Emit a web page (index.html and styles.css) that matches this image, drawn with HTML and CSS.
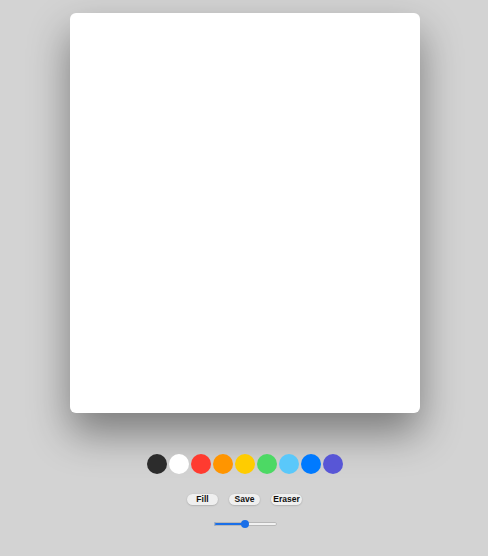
FILE: index.html
```html
<!DOCTYPE html>
<html>
<head>
<meta charset="utf-8">
<link rel="stylesheet" href="styles.css">
</head>
<body>
<div class="app">
  <div class="canvas"></div>
  <div class="palette">
    <span class="swatch c-black"></span>
    <span class="swatch c-white"></span>
    <span class="swatch c-red"></span>
    <span class="swatch c-orange"></span>
    <span class="swatch c-yellow"></span>
    <span class="swatch c-green"></span>
    <span class="swatch c-sky"></span>
    <span class="swatch c-blue"></span>
    <span class="swatch c-indigo"></span>
  </div>
  <div class="actions">
    <button class="btn">Fill</button>
    <button class="btn">Save</button>
    <button class="btn">Eraser</button>
  </div>
  <input class="range" type="range" min="1" max="100" value="50">
</div>
</body>
</html>
```
FILE: styles.css
```css
html, body {
  margin: 0;
  padding: 0;
  background: #d3d3d3;
}
.app {
  display: flex;
  flex-direction: column;
  align-items: center;
  padding-top: 13px;
  padding-left: 2px;
  font-family: "Liberation Sans", Arial, sans-serif;
}
.canvas {
  width: 350px;
  height: 400px;
  background: #fff;
  border-radius: 6px;
  box-shadow: 0 20px 40px rgba(0, 0, 0, 0.42);
}
.palette {
  display: flex;
  gap: 2px;
  margin-top: 41px;
}
.swatch {
  width: 20px;
  height: 20px;
  border-radius: 50%;
  display: block;
}
.c-black { background: #2c2c2c; }
.c-white { background: #ffffff; }
.c-red { background: #ff3b30; }
.c-orange { background: #ff9500; }
.c-yellow { background: #ffcc00; }
.c-green { background: #4cd964; }
.c-sky { background: #5ac8fa; }
.c-blue { background: #007aff; }
.c-indigo { background: #5856d6; }
.actions {
  display: flex;
  gap: 11px;
  margin-top: 20px;
  margin-left: -1px;
}
.btn {
  font-family: "Liberation Sans", Arial, sans-serif;
  font-weight: bold;
  font-size: 8.5px;
  line-height: 9px;
  width: 31px;
  padding: 1px 0;
  border: none;
  border-radius: 6px;
  background: #efefef;
  color: #111;
  text-align: center;
  box-shadow: 0 0.5px 1.5px rgba(0, 0, 0, 0.25);
}
.range {
  -webkit-appearance: none;
  appearance: none;
  width: 63px;
  height: 8px;
  margin: 15px 0 0;
  background: transparent;
}
.range::-webkit-slider-runnable-track {
  height: 4px;
  border-radius: 2px;
  background: linear-gradient(to right, #1a6fe8 0 50%, #f2f2f2 50% 100%);
  box-shadow: inset 0 0 0 1px #b8b8b8;
}
.range::-webkit-slider-thumb {
  -webkit-appearance: none;
  width: 8px;
  height: 8px;
  border-radius: 50%;
  background: #1a6fe8;
  margin-top: -2px;
}
```
